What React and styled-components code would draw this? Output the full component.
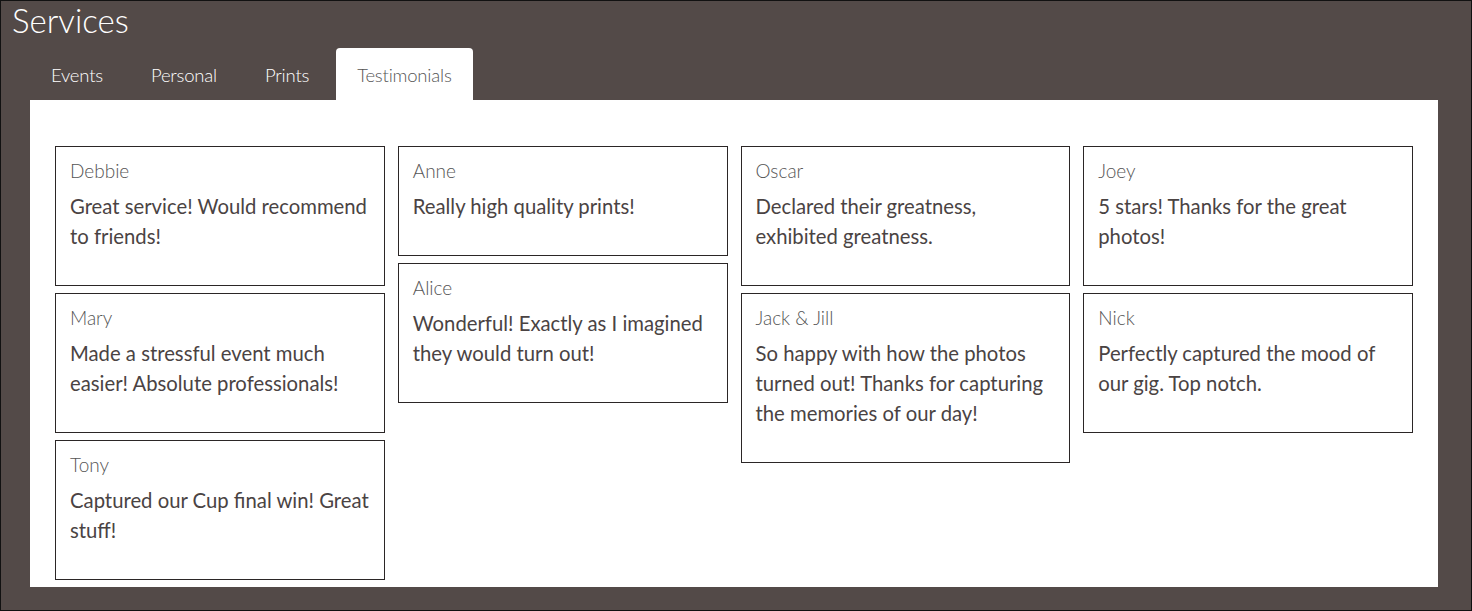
import React from "react";
import styled, { createGlobalStyle } from "styled-components";

const GlobalStyle = createGlobalStyle`
	html, body {
		margin: 0;
		padding: 0;
		background: #fff;
	}
	* {
		box-sizing: border-box;
	}
`;

const Page = styled.div`
	width: 1472px;
	height: 611px;
	background-color: #534a48;
	border: 1px solid #111;
	padding: 0 33px 0 29px;
	overflow: hidden;
`;

const Title = styled.h1`
	margin: 0 0 0 -29px;
	padding-left: 11px;
	font-family: "Lato", "Liberation Sans", sans-serif;
	font-weight: 300;
	font-size: 33px;
	line-height: 38px;
	height: 47px;
	color: #fff;
`;

const Tabs = styled.ul`
	display: flex;
	gap: 6px;
	list-style: none;
	margin: 0;
	padding: 0;
	height: 52px;
`;

const Tab = styled.li`
	padding: 1px 21px 0;
	height: 52px;
	display: flex;
	align-items: center;
	border-radius: 4px 4px 0 0;
	font-family: "Lato", "Liberation Sans", sans-serif;
	font-weight: 300;
	font-size: 18.5px;
	letter-spacing: -0.2px;
	color: ${(p) => (p.$active ? "#555" : "#fff")};
	background: ${(p) => (p.$active ? "#fff" : "transparent")};
`;

const Panel = styled.div`
	background: #fff;
	padding: 46px 25px 7px;
	display: grid;
	grid-template-columns: repeat(4, 1fr);
	gap: 13px;
	align-items: start;
`;

const Column = styled.div`
	display: flex;
	flex-direction: column;
	gap: 7px;
`;

const Card = styled.div`
	border: 1px solid #2b2626;
	padding: 10px 10px 10px 14px;
`;

const Name = styled.div`
	font-family: "Lato", "Liberation Sans", sans-serif;
	font-weight: 300;
	font-size: 19px;
	line-height: 27px;
	color: #555;
`;

const Message = styled.p`
	margin: 7px 0 24px;
	font-family: "Lato", "Liberation Sans", sans-serif;
	font-size: 20.3px;
	line-height: 30px;
	color: #4a4343;
`;

const columns = [
	[
		{ name: "Debbie", text: "Great service! Would recommend to friends!" },
		{ name: "Mary", text: "Made a stressful event much easier! Absolute professionals!" },
		{ name: "Tony", text: "Captured our Cup final win! Great stuff!" },
	],
	[
		{ name: "Anne", text: "Really high quality prints!" },
		{ name: "Alice", text: "Wonderful! Exactly as I imagined they would turn out!" },
	],
	[
		{ name: "Oscar", text: "Declared their greatness, exhibited greatness." },
		{
			name: "Jack & Jill",
			text: "So happy with how the photos turned out! Thanks for capturing the memories of our day!",
		},
	],
	[
		{ name: "Joey", text: "5 stars! Thanks for the great photos!" },
		{ name: "Nick", text: "Perfectly captured the mood of our gig. Top notch." },
	],
];

const tabs = ["Events", "Personal", "Prints", "Testimonials"];

export default function App() {
	return (
		<>
			<GlobalStyle />
			<Page>
				<Title>Services</Title>
				<Tabs>
					{tabs.map((t) => (
						<Tab key={t} $active={t === "Testimonials"}>
							{t}
						</Tab>
					))}
				</Tabs>
				<Panel>
					{columns.map((col, i) => (
						<Column key={i}>
							{col.map((c) => (
								<Card key={c.name}>
									<Name>{c.name}</Name>
									<Message>{c.text}</Message>
								</Card>
							))}
						</Column>
					))}
				</Panel>
			</Page>
		</>
	);
}
